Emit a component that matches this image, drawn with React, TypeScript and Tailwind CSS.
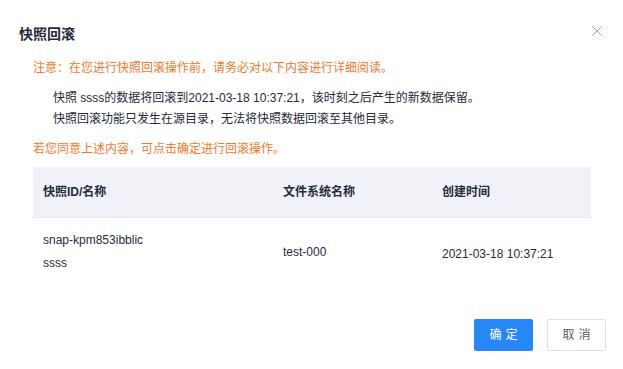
import { X } from "lucide-react";

const font = { fontFamily: '"Liberation Sans", "Noto Sans CJK SC", sans-serif' };

export default function App() {
  return (
    <div className="w-[623px] h-[369px] bg-white text-[#252b3a]" style={font}>
      <div className="flex items-start justify-between pl-[19px] pr-[17px] pt-[24px]">
        <h1 className="text-[14px] font-bold leading-[20px]">快照回滚</h1>
        <button className="mt-[-2px] text-[#8a8e99]">
          <X size={18} strokeWidth={1.1} />
        </button>
      </div>

      <div className="px-[32px] pl-[33px] text-[12px]">
        <p className="mt-[14px] leading-[20px] text-[#f6782c]">
          注意：在您进行快照回滚操作前，请务必对以下内容进行详细阅读。
        </p>
        <div className="mt-[10px] pl-[20px] leading-[21px]">
          <p>快照 ssss的数据将回滚到2021-03-18 10:37:21，该时刻之后产生的新数据保留。</p>
          <p>快照回滚功能只发生在源目录，无法将快照数据回滚至其他目录。</p>
        </div>
        <p className="mt-[9px] leading-[20px] text-[#f6782c]">
          若您同意上述内容，可点击确定进行回滚操作。
        </p>

        <table className="mt-[8px] w-[558px] border-collapse text-left">
          <thead>
            <tr className="h-[50px] bg-[#f0f2f7] border-b border-[#e5e8ef]">
              <th className="w-[250px] pl-[10px] font-bold">快照ID/名称</th>
              <th className="w-[159px] font-bold">文件系统名称</th>
              <th className="font-bold">创建时间</th>
            </tr>
          </thead>
          <tbody>
            <tr className="h-[70px]">
              <td className="pl-[10px]">
                <div className="leading-[23px]">snap-kpm853ibblic</div>
                <div className="leading-[23px]">ssss</div>
              </td>
              <td>test-000</td>
              <td className="pt-[3px]">2021-03-18 10:37:21</td>
            </tr>
          </tbody>
        </table>
      </div>

      <div className="mt-[32px] flex justify-end gap-[14px] pr-[17px]">
        <button className="h-[32px] w-[59px] rounded-[2px] bg-[#2688f5] text-[12px] tracking-[4px] pl-[4px] text-white">
          确定
        </button>
        <button className="h-[32px] w-[59px] rounded-[2px] border border-[#dfe1e6] bg-white text-[12px] tracking-[4px] pl-[4px] text-[#575d6c]">
          取消
        </button>
      </div>
    </div>
  );
}
